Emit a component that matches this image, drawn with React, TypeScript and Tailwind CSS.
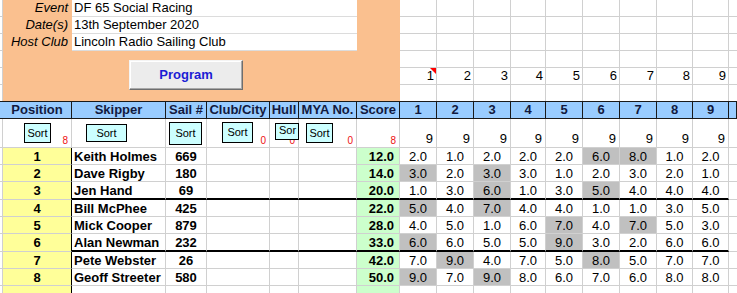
import React from "react";

const G = "border-[#d0d0d0]";

type Row = {
  pos: number;
  name: string;
  sail: string;
  score: string;
  r: number[];
  d: number[];
};

const rows: Row[] = [
  { pos: 1, name: "Keith Holmes", sail: "669", score: "12.0", r: [2, 1, 2, 2, 2, 6, 8, 1, 2], d: [5, 6] },
  { pos: 2, name: "Dave Rigby", sail: "180", score: "14.0", r: [3, 2, 3, 3, 1, 2, 3, 2, 1], d: [0, 2] },
  { pos: 3, name: "Jen Hand", sail: "69", score: "20.0", r: [1, 3, 6, 1, 3, 5, 4, 4, 4], d: [2, 5] },
  { pos: 4, name: "Bill McPhee", sail: "425", score: "22.0", r: [5, 4, 7, 4, 4, 1, 1, 3, 5], d: [0, 2] },
  { pos: 5, name: "Mick Cooper", sail: "879", score: "28.0", r: [4, 5, 1, 6, 7, 4, 7, 5, 3], d: [4, 6] },
  { pos: 6, name: "Alan Newman", sail: "232", score: "33.0", r: [6, 6, 5, 5, 9, 3, 2, 6, 6], d: [0, 4] },
  { pos: 7, name: "Pete Webster", sail: "26", score: "42.0", r: [7, 9, 4, 7, 5, 8, 5, 7, 7], d: [1, 5] },
  { pos: 8, name: "Geoff Streeter", sail: "580", score: "50.0", r: [9, 7, 9, 8, 6, 7, 6, 8, 8], d: [0, 2] },
];

const races = [1, 2, 3, 4, 5, 6, 7, 8, 9];

function SortBtn({ cls }: { cls: string }) {
  return (
    <div
      className={`shrink-0 border border-black bg-[#ccffff] text-[11px] leading-[13px] flex items-center justify-center ${cls}`}
    >
      Sort
    </div>
  );
}

function Red({ v }: { v: string }) {
  return (
    <span className="ml-auto self-end pr-[3px] text-[10px] leading-[12px] text-[#ee1111]">{v}</span>
  );
}

export default function App() {
  return (
    <div className="w-[737px] h-[293px] overflow-hidden bg-white font-['Liberation_Sans',Arial,sans-serif] text-[13px] text-black">
      <div className="grid grid-cols-[3px_69px_94px_41px_63px_29px_58px_43px_37px_37px_37px_35px_37px_37px_37px_36px_36px_1fr] grid-rows-[17px_17px_17px_17px_17px_16px_18px_29px_17px_17px_18px_17px_17px_18px_17px_17px_17px]">
        {/* Top area */}
        {[0, 1, 2, 3, 4, 5].map((ri) => (
          <React.Fragment key={"top" + ri}>
            <div className={`border-r ${ri < 5 ? "border-b" : ""} ${G} bg-white`} />
            {ri === 0 && (
              <div className="col-start-2 col-span-7 row-start-1 row-span-6 bg-[#fac08f] flex flex-col">
                {[
                  ["Event", "DF 65 Social Racing"],
                  ["Date(s)", "13th September 2020"],
                  ["Host Club", "Lincoln Radio Sailing Club"],
                ].map(([label, value]) => (
                  <div key={label} className="flex h-[17px]">
                    <div className="w-[69px] pr-[4px] text-right italic leading-[16px] whitespace-nowrap">
                      {label}
                    </div>
                    <div className="w-[285px] bg-white border-b border-[#dcdcdc] pl-[2px] leading-[16px] whitespace-nowrap">
                      {value}
                    </div>
                  </div>
                ))}
                <div className="ml-[126px] mt-[9px] w-[114px] h-[30px] bg-[#ececec] border border-t-[#f4f4f4] border-l-[#f4f4f4] border-r-[#6e6e6e] border-b-[#6e6e6e] shadow-[inset_-1px_-1px_0_#a8a8a8,inset_1px_1px_0_#ffffff] flex items-center justify-center font-bold text-[#1c1cd4] leading-[16px]">
                  Program
                </div>
              </div>
            )}
            {races.map((n) => (
              <div
                key={n}
                className={`relative border-r ${ri < 5 ? "border-b" : ""} ${G} bg-white text-right pr-[2px] leading-[16px]`}
              >
                {ri === 4 ? n : ""}
                {ri === 4 && n === 1 && (
                  <span className="absolute top-0 right-0 w-0 h-0 border-l-[6px] border-l-transparent border-t-[6px] border-t-[#ff0000]" />
                )}
              </div>
            ))}
            <div className={`${ri < 5 ? "border-b" : ""} ${G} bg-white`} />
          </React.Fragment>
        ))}

        {/* Header row */}
        <div className="bg-[#99ccff] border-t border-b border-[#1a1a1a]" />
        {["Position", "Skipper", "Sail #", "Club/City", "Hull", "MYA No.", "Score", ...races.map(String), ""].map(
          (h, i) => (
            <div
              key={"h" + i}
              className="bg-[#99ccff] border-t border-b border-r border-[#1a1a1a] font-bold text-[#121a40] text-center leading-[16px] whitespace-nowrap overflow-hidden"
            >
              {h}
            </div>
          )
        )}

        {/* Sort row */}
        <div className={`border-r border-b ${G}`} />
        <div className={`flex items-start border-r border-b ${G}`}>
          <SortBtn cls="ml-[21px] mt-[4px] w-[27px] h-[20px]" />
          <Red v="8" />
        </div>
        <div className={`flex items-start border-r border-b ${G}`}>
          <SortBtn cls="ml-[14px] mt-[5px] w-[41px] h-[18px]" />
        </div>
        <div className={`flex items-start border-r border-b ${G}`}>
          <SortBtn cls="ml-[3px] mt-[3px] w-[33px] h-[23px]" />
        </div>
        <div className={`flex items-start border-r border-b ${G}`}>
          <SortBtn cls="ml-[15px] mt-[3px] w-[31px] h-[21px]" />
          <Red v="0" />
        </div>
        <div className={`relative flex items-start border-r border-b ${G}`}>
          <span className="absolute right-[3px] bottom-0 text-[10px] leading-[12px] text-[#ee1111]">0</span>
          <div className="relative z-10 ml-[5px] mt-[4px] w-[24px] h-[17px] shrink-0 border border-black bg-[#ccffff] text-[11px] leading-[13px] pl-[3px] whitespace-nowrap">
            Sor
          </div>
        </div>
        <div className={`flex items-start border-r border-b ${G}`}>
          <SortBtn cls="ml-[7px] mt-[4px] w-[27px] h-[20px]" />
          <Red v="0" />
        </div>
        <div className={`flex items-start border-r border-b ${G}`}>
          <Red v="8" />
        </div>
        {races.map((n) => (
          <div key={"s" + n} className={`flex items-end justify-end border-r border-b ${G} pr-[3px] leading-[16px]`}>
            9
          </div>
        ))}
        <div className={`border-b ${G}`} />

        {/* Data rows */}
        {rows.map((row, ri) => {
          const thick = ri === 2 || ri === 5;
          const bb = thick ? "border-b-2 border-b-black" : "border-b border-b-[#d0d0d0]";
          return (
            <React.Fragment key={"r" + ri}>
              <div className={`border-r border-b ${G}`} />
              <div className="bg-[#ffff99] border-r border-r-black border-b border-b-[#d0d0d0] font-bold text-center leading-[16px] pt-[1px]">
                {row.pos}
              </div>
              <div className={`border-r border-r-[#d0d0d0] ${bb} font-bold pl-[2px] leading-[16px] pt-[1px] whitespace-nowrap`}>
                {row.name}
              </div>
              <div className={`border-r border-r-[#d0d0d0] ${bb} font-bold text-center leading-[16px] pt-[1px]`}>
                {row.sail}
              </div>
              <div className={`border-r border-r-[#d0d0d0] ${bb}`} />
              <div className={`border-r border-r-[#d0d0d0] ${bb}`} />
              <div className={`border-r border-r-[#d0d0d0] ${bb}`} />
              <div className={`bg-[#ccffcc] border-r border-r-[#d0d0d0] ${bb} font-bold text-right pr-[5px] leading-[16px] pt-[1px]`}>
                {row.score}
              </div>
              {row.r.map((v, i) => (
                <div
                  key={"c" + i}
                  className={`${row.d.includes(i) ? "bg-[#c0c0c0]" : "bg-white"} border-r border-r-[#d0d0d0] ${bb} text-center leading-[16px] pt-[1px]`}
                >
                  {v.toFixed(1)}
                </div>
              ))}
              <div className={`border-b ${G}`} />
            </React.Fragment>
          );
        })}

        {/* Empty row */}
        <div className={`border-r border-b ${G}`} />
        <div className="bg-[#ffff99] border-r border-r-black border-b border-b-[#d0d0d0]" />
        {[0, 1, 2, 3, 4].map((i) => (
          <div key={"e" + i} className={`border-r border-b ${G}`} />
        ))}
        <div className={`bg-[#ccffcc] border-r border-b ${G}`} />
        {races.map((n) => (
          <div key={"er" + n} className={`border-r border-b ${G}`} />
        ))}
        <div className={`border-b ${G}`} />
      </div>
    </div>
  );
}
